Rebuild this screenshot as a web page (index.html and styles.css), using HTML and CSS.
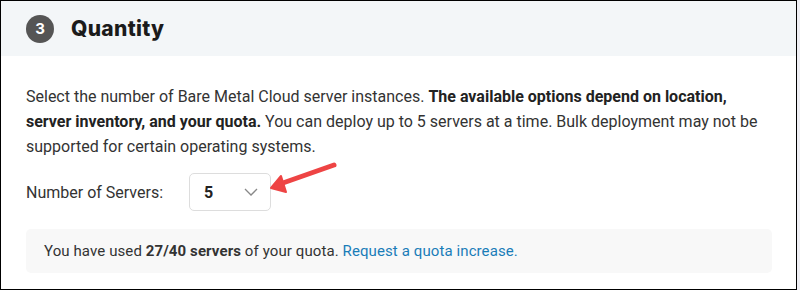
FILE: index.html
```html
<!DOCTYPE html>
<html lang="en">
<head>
    <meta charset="UTF-8">
    <title>Quantity</title>
    <link rel="stylesheet" href="styles.css">
</head>
<body>

<div class="frame">
    <div class="section-head">
        <span class="step">3</span>
        <h2>Quantity</h2>
    </div>

    <div class="section-body">
        <p class="intro">Select the number of Bare Metal Cloud server instances. <b>The available options depend on location, server inventory, and your quota.</b> You can deploy up to 5 servers at a time. Bulk deployment may not be supported for certain operating systems.</p>

        <div class="field">
            <label for="serverCount">Number of Servers:</label>
            <div class="select">
                <span class="select-value">5</span>
                <svg class="chevron" width="14" height="8" viewBox="0 0 14 8">
                    <path d="M1 1 L7 7 L13 1" fill="none" stroke="#888" stroke-width="1.3"/>
                </svg>
            </div>
        </div>

        <div class="quota">
            You have used <b>27/40 servers</b> of your quota. <a href="#">Request a quota increase.</a>
        </div>
    </div>

    <!-- annotation arrow -->
    <svg class="callout" width="80" height="40" viewBox="0 0 80 40">
        <path d="M66 6 L12 25" stroke="#ee4444" stroke-width="5" stroke-linecap="round"/>
        <path d="M3 29 L13 17 L18 33 Z" fill="#ee4444" stroke="#ee4444" stroke-width="2" stroke-linejoin="round"/>
    </svg>
</div>

</body>
</html>
```

FILE: styles.css
```css
body {
    margin: 0;
    padding: 0;
    width: 800px;
    height: 290px;
    background-color: #eeeef3;
    font-family: Roboto, "Liberation Sans", Arial, sans-serif;
    overflow: hidden;
}

.frame {
    position: relative;
    width: 795px;
    height: 288px;
    border: 1px solid #000;
    background-color: #fff;
}

.section-head {
    display: flex;
    align-items: center;
    height: 55px;
    padding-left: 25px;
    background-color: #f3f6f8;
}

.step {
    display: flex;
    align-items: center;
    justify-content: center;
    width: 28px;
    height: 28px;
    border-radius: 50%;
    background-color: #555;
    color: #fff;
    font-family: Inter, "Liberation Sans", sans-serif;
    font-weight: 700;
    font-size: 15px;
}

.section-head h2 {
    margin: 0 0 0 17px;
    font-family: Inter, "Liberation Sans", sans-serif;
    font-weight: 800;
    font-size: 21px;
    color: #1b1b1b;
    letter-spacing: 0.3px;
}

.section-body {
    padding: 28px 24px 0 25px;
}

.intro {
    margin: 0;
    font-size: 16px;
    line-height: 25px;
    color: #333;
}

.intro b {
    color: #222;
}

.field {
    display: flex;
    align-items: center;
    margin-top: 14px;
}

.field label {
    width: 163px;
    font-size: 16px;
    color: #333;
}

.select {
    display: flex;
    align-items: center;
    justify-content: space-between;
    box-sizing: border-box;
    width: 82px;
    height: 38px;
    padding: 0 12px 0 14px;
    border: 1px solid #ddd;
    border-radius: 5px;
    background-color: #fff;
}

.select-value {
    font-size: 16px;
    font-weight: 700;
    color: #222;
}

.quota {
    margin-top: 18px;
    padding: 0 18px;
    height: 44px;
    line-height: 44px;
    border-radius: 5px;
    background-color: #f8f8f8;
    font-size: 15px;
    letter-spacing: 0.1px;
    color: #333;
}

.quota a {
    color: #1a7db8;
    text-decoration: none;
}

.callout {
    position: absolute;
    left: 267px;
    top: 158px;
}
```
